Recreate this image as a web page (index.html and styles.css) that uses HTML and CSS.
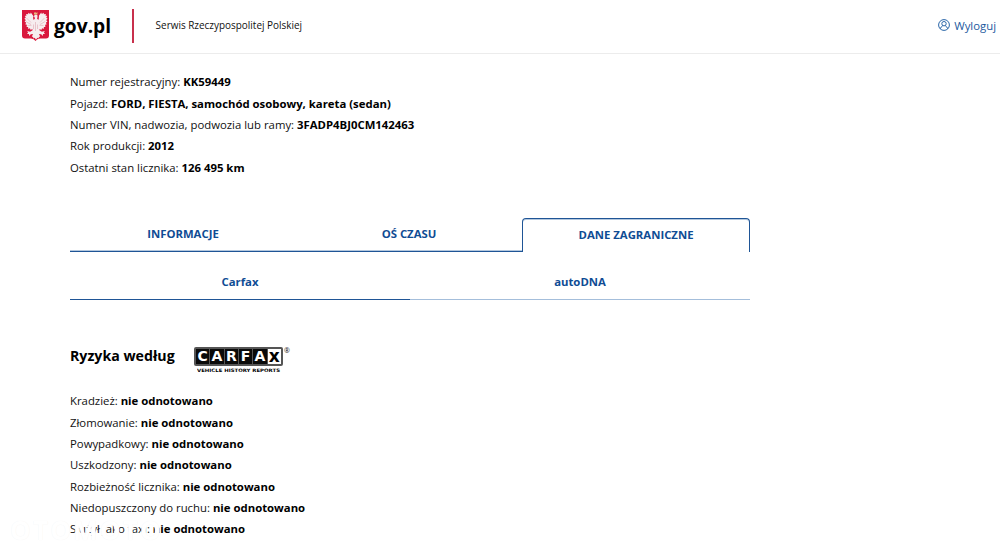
FILE: index.html
```html
<!DOCTYPE html>
<html lang="pl">

<head>
    <meta charset="UTF-8">
    <meta name="viewport" content="width=device-width, initial-scale=1.0">
    <title>Historia pojazdu - gov.pl</title>
    <link rel="stylesheet" href="styles.css">
</head>

<body>
    <header class="header">
        <a class="logo" href="#">
            <svg class="crest" viewBox="0 0 27 31">
                <path fill="#d9183d" d="M0 0h27v25.500q0 3-3 3h-6q-3 0-4.500 2.500-1.500-2.500-4.500-2.500h-6q-3 0-3-3z" />
                <path fill="#f6edef" d="M13.500 4.500c1.600 0 2.300.9 2 2.300l-.4 2.200 1.600.8.300-4.400 2.200-2.900.6 1.400 2-1.200v1.600l2.200-.3-.6 1.600 1.800.5-1 1.500 1.400 1.200-1.400 1.300 1.200 1.600-1.500.8.700 2-1.500.3.300 2.200-1.500-.1-.2 2-1.600-.6-.8 1.600-1.600-1-.3 1.300 2.500 1.600 2.900-.7-.9 1.600 1.200 1.400-2 0-.4 1.800-1.500-1.700-2.300-.3 1.300 2.600-1.300.4-.3 1.700-1.300-.8-1.300 2-1.300-2-1.300.8-.3-1.700-1.300-.4 1.300-2.600-2.300.3-1.500 1.700-.4-1.800-2 0 1.200-1.400-.9-1.600 2.900.7 2.500-1.600-.3-1.300-1.600 1-.8-1.600-1.600.6-.2-2-1.500.1.300-2.200-1.500-.3.700-2-1.500-.8 1.200-1.600-1.400-1.300 1.400-1.200-1-1.500 1.800-.5-.6-1.600 2.200.3v-1.600l2 1.200.6-1.400 2.200 2.900.3 4.400 1.600-.8-.4-2.200-1.400-.4z" />
                <path fill="none" stroke="#dfa9b1" stroke-width=".6" d="M4.500 8l4.500 4.500M3.800 11.500l5.200 3M5.500 15.500l4-.2M22.500 8L18 12.500M23.200 11.500l-5.200 3M21.500 15.500l-4-.2M13.500 12v9M11.500 14.500v4.500M15.500 14.500v4.500" />
                <path fill="#e8b87c" d="M12 2l1 1 .7-1 .7 1 1-1v2.500h-3.400z" />
            </svg>
            <span class="logo-text">gov.pl</span>
        </a>
        <span class="divider"></span>
        <span class="service">Serwis Rzeczypospolitej Polskiej</span>
        <a class="logout" href="#">
            <svg class="user-icon" viewBox="0 0 12 12">
                <circle cx="6" cy="6" r="5.400" />
                <circle cx="6" cy="4.700" r="2.200" />
                <path d="M2.200 9.800Q3 7.600 4.800 6.700M9.800 9.800Q9 7.600 7.200 6.700" />
            </svg>
            <span>Wyloguj</span>
        </a>
    </header>

    <main class="container">
        <section class="vehicle">
            <p>Numer rejestracyjny: <b>KK59449</b></p>
            <p>Pojazd: <b>FORD, FIESTA, samochód osobowy, kareta (sedan)</b></p>
            <p>Numer VIN, nadwozia, podwozia lub ramy: <b>3FADP4BJ0CM142463</b></p>
            <p>Rok produkcji: <b>2012</b></p>
            <p>Ostatni stan licznika: <b>126 495 km</b></p>
        </section>

        <nav class="tabs">
            <a class="tab" href="#">INFORMACJE</a>
            <a class="tab" href="#">OŚ CZASU</a>
            <a class="tab active" href="#">DANE ZAGRANICZNE</a>
        </nav>

        <nav class="subtabs">
            <a class="subtab active" href="#">Carfax</a>
            <a class="subtab" href="#">autoDNA</a>
        </nav>

        <div class="risk-title">
            <h2>Ryzyka według</h2>
            <div class="carfax">
                <div class="carfax-box">
                    <span>C</span><span>A</span><span>R</span><span>F</span><span>A</span><span class="light">x</span>
                </div>
                <svg class="carfax-caption" viewBox="0 0 84 7">
                    <text x="0" y="5.500" textLength="83" lengthAdjust="spacingAndGlyphs">VEHICLE HISTORY REPORTS</text>
                </svg>
            </div>
            <span class="registered">®</span>
        </div>

        <section class="risks">
            <p>Kradzież: <b>nie odnotowano</b></p>
            <p>Złomowanie: <b>nie odnotowano</b></p>
            <p>Powypadkowy: <b>nie odnotowano</b></p>
            <p>Uszkodzony: <b>nie odnotowano</b></p>
            <p>Rozbieżność licznika: <b>nie odnotowano</b></p>
            <p>Niedopuszczony do ruchu: <b>nie odnotowano</b></p>
            <p>Służył jako taxi: <b>nie odnotowano</b></p>
        </section>
    </main>

    <div class="watermark">OTOMOTO</div>
</body>

</html>
```
FILE: styles.css
```css
* {
    box-sizing: border-box;
}

body {
    margin: 0;
    height: 550px;
    overflow: hidden;
    background-color: #fff;
    color: #111;
    font-family: "Open Sans", sans-serif;
    font-size: 11.35px;
    line-height: 21.33px;
}

a {
    color: #0f4c94;
    text-decoration: none;
}

b {
    color: #000;
    font-weight: 700;
}

p,
h2 {
    margin: 0;
}

.header {
    display: flex;
    align-items: center;
    height: 54px;
    padding: 0 4px 2px 22px;
    border-bottom: 1px solid #ececec;
}

.logo {
    display: flex;
    align-items: center;
    gap: 5px;
    color: #000;
}

.crest {
    width: 27px;
    height: 31px;
    margin-top: -1px;
}

.logo-text {
    font-size: 19.2px;
    font-weight: 700;
}

.divider {
    width: 2px;
    height: 34px;
    margin: 0 21.5px 0 21px;
    background-color: #c8304c;
}

.service {
    margin-top: 1px;
    font-size: 9.95px;
}

.logout {
    display: flex;
    align-items: center;
    gap: 4px;
    margin-left: auto;
    color: #1d5aa0;
}

.user-icon {
    width: 12px;
    height: 12px;
    fill: none;
    stroke: #2a66a8;
}

.container {
    width: 680px;
    margin-left: 70px;
}

.vehicle {
    padding-top: 17.4px;
}

.tabs {
    display: flex;
    height: 34px;
    margin-top: 39.95px;
}

.tab {
    flex: 1;
    border-bottom: 1px solid #1f5596;
    box-shadow: inset 0 -1px 0 #b4c8de;
    font-weight: 700;
    line-height: 32px;
    text-align: center;
}

.tab.active {
    border: 1px solid #1f5596;
    border-bottom: none;
    border-radius: 4px 4px 0 0;
    box-shadow: inset 0 1px 0 #b4c8de;
}

.subtabs {
    display: flex;
    height: 48px;
}

.subtab {
    flex: 1;
    padding-top: 19.5px;
    border-bottom: 1px solid #a4bedb;
    font-weight: 700;
    text-align: center;
}

.subtab.active {
    border-bottom-color: #1f5596;
}

.risk-title {
    display: flex;
    height: 90.5px;
    padding-top: 47px;
}

h2 {
    width: 124px;
    color: #000;
    font-size: 14.2px;
    line-height: 18px;
}

.carfax {
    width: 89px;
}

.carfax-box {
    display: flex;
    gap: 1px;
    height: 19px;
    padding: 2px;
    border-radius: 2px;
    background-color: #555;
}

.carfax-box span {
    flex: 1;
    background-color: #0a0a0a;
    color: #fff;
    font-family: "DejaVu Sans", sans-serif;
    font-size: 14px;
    font-weight: 700;
    line-height: 15px;
    text-align: center;
}

.carfax-box .light {
    background-color: #fff;
    color: #000;
    font-size: 17px;
}

.carfax-caption {
    display: block;
    width: 84px;
    height: 7px;
    margin: 0 auto;
    font-family: "DejaVu Sans", sans-serif;
    font-size: 4.6px;
    font-weight: 700;
}

.registered {
    margin-left: 1px;
    font-size: 7px;
    line-height: 8px;
}

/* white brand mark over the bottom left corner */
.watermark {
    position: absolute;
    left: 10px;
    top: 520px;
    color: #fff;
    font-size: 26px;
    font-weight: 700;
    letter-spacing: 2.2px;
    line-height: 20px;
    text-shadow: 0 0 1px #f2f2f2;
}
```
